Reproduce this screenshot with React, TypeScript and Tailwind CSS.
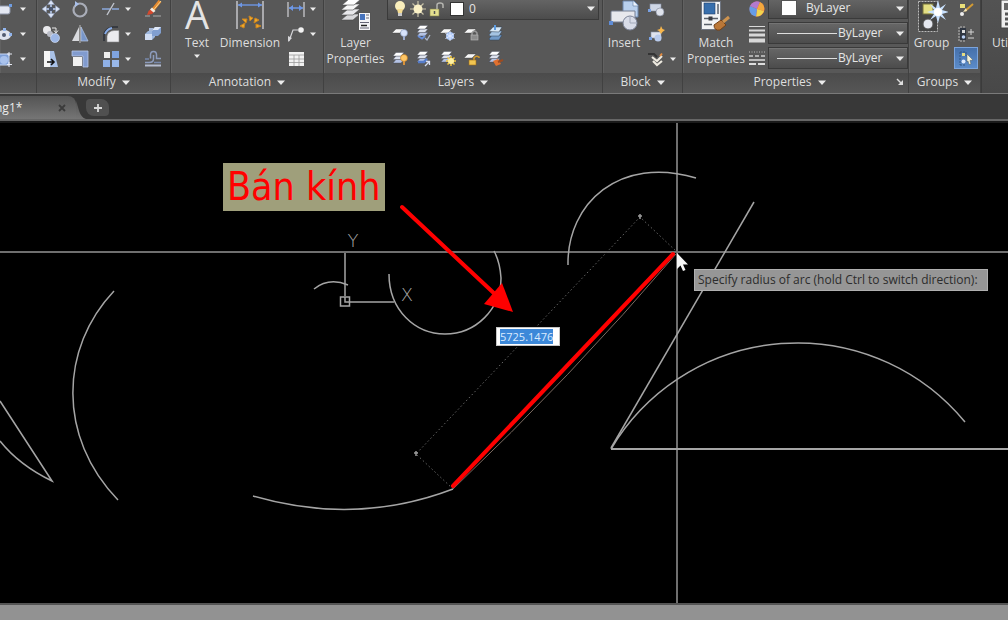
import React from "react";

type IconProps = { children: React.ReactNode; size?: "sm" | "lg" };

function Icon({ children, size = "sm" }: IconProps) {
  return size === "sm" ? (
    <svg viewBox="0 0 18 18" className="block h-[18px] w-[18px] shrink-0" aria-hidden="true">
      {children}
    </svg>
  ) : (
    <svg viewBox="0 0 32 32" className="block h-8 w-8 shrink-0" aria-hidden="true">
      {children}
    </svg>
  );
}

function Caret({ large = false }: { large?: boolean }) {
  return (
    <svg
      viewBox="0 0 8 5"
      className={large ? "block h-[5px] w-2 shrink-0" : "block h-1 w-[6px] shrink-0"}
      aria-hidden="true"
    >
      <path d="M0 0.5H8L4 5Z" fill="#ececec" />
    </svg>
  );
}

function Tool({ label, children, caret = false }: { label: string; children: React.ReactNode; caret?: boolean }) {
  return (
    <button type="button" aria-label={label} className="flex h-6 items-center gap-[5px]">
      <Icon>{children}</Icon>
      {caret && <Caret />}
    </button>
  );
}

function BigTool({
  lines,
  width,
  children,
  caret = false,
}: {
  lines: string[];
  width: string;
  children: React.ReactNode;
  caret?: boolean;
}) {
  return (
    <button type="button" className={`flex shrink-0 flex-col items-center ${width}`}>
      <span className="flex h-[35px] items-start">
        <Icon size="lg">{children}</Icon>
      </span>
      {lines.map((line) => (
        <span key={line} className="whitespace-nowrap text-xs leading-4">
          {line}
        </span>
      ))}
      {caret && (
        <span className="mt-[3px]">
          <Caret />
        </span>
      )}
    </button>
  );
}

function Panel({
  title,
  width,
  children,
  launcher = false,
}: {
  title: string;
  width: string;
  children: React.ReactNode;
  launcher?: boolean;
}) {
  return (
    <section
      className={`flex shrink-0 flex-col border-r border-[#414141] shadow-[inset_1px_0_0_#616161] ${width}`}
    >
      <div className="flex h-[73px] items-start">{children}</div>
      <div className="flex h-5 items-center bg-linear-to-b from-[#4b4b4b] to-[#565656] pb-[2px]">
        <button type="button" className="flex flex-1 items-center justify-center gap-[6px] text-xs leading-4">
          {title}
          {title && <Caret large />}
        </button>
        {launcher && (
          <button type="button" aria-label="Open properties palette" className="pr-1">
            <svg viewBox="0 0 8 8" className="h-2 w-2" aria-hidden="true">
              <path d="M1 1L5 5" stroke="#ddd" strokeWidth="1.4" fill="none" />
              <path d="M7 2V7H2Z" fill="#ddd" />
            </svg>
          </button>
        )}
      </div>
    </section>
  );
}

function Stack({ y = 0 }: { y?: number }) {
  return (
    <g transform={`translate(0 ${y})`} stroke="#454a58" strokeWidth=".4">
      <path d="M2 14L5 10.500H13L10 14Z" fill="#b5c3e4" />
      <path d="M2 10.500L5 7H13L10 10.500Z" fill="#dde2ee" />
      <path d="M2 7L5 3.500H13L10 7Z" fill="#fff" />
    </g>
  );
}

function Sheet() {
  return <path d="M1 9L5 5H13L9 9Z" fill="#f7f7f7" stroke="#444" strokeWidth=".4" />;
}

const comboClass =
  "flex h-[22px] items-center border border-[#3a3a3a] bg-linear-to-b from-[#676767] to-[#4c4c4c] pr-[3px] shadow-[inset_0_1px_0_#747474]";
const selectClass = "min-w-0 flex-1 appearance-none bg-transparent text-xs leading-4 text-[#e6e6e6] outline-none";

function CreatePanel() {
  return (
    <Panel title="" width="w-[37px]">
      <div className="-mt-[3px] -ml-[3px] flex flex-col gap-px">
        <Tool label="Rectangle" caret>
          <rect x="0" y="6" width="13" height="8" rx="2" fill="#e4e8f2" stroke="#8d95a8" />
          <rect x="12" y="4" width="3" height="3" fill="#6f9de2" />
        </Tool>
        <Tool label="Ellipse" caret>
          <ellipse cx="7" cy="10" rx="7" ry="5" fill="#dfe3ee" />
          <circle cx="7" cy="10" r="2" fill="#525b70" />
          <rect x="6" y="3" width="3" height="3" fill="#91b5ee" />
          <rect x="12" y="8" width="3" height="3" fill="#91b5ee" />
        </Tool>
        <Tool label="Boundary" caret>
          <rect x="1" y="4" width="11" height="11" fill="#7f9fd6" stroke="#c8d8f5" />
          <circle cx="7" cy="10" r="4" fill="#a9c2ec" />
          <path d="M12 2V6M10 4H15M12 12V17M10 14.5H15" stroke="#e5e9f4" />
        </Tool>
      </div>
    </Panel>
  );
}

function ModifyPanel() {
  return (
    <Panel title="Modify" width="w-[134px]">
      <div className="-mt-[3px] ml-[5px] grid grid-cols-[29px_31px_42px_20px] gap-y-px">
        <Tool label="Move">
          <path
            d="M9 0L12.500 4.500H5.500ZM9 18L12.500 13.500H5.500ZM0 9L4.500 5.500V12.500ZM18 9L13.500 5.500V12.500Z"
            fill="#dbe4f6"
            stroke="#8092b5"
            strokeWidth=".5"
          />
          <path d="M9 4V14M4 9H14" stroke="#a5b4d0" strokeWidth="2" />
          <rect x="7" y="7" width="4" height="4" fill="#4a566e" />
        </Tool>
        <Tool label="Rotate">
          <circle cx="9" cy="10" r="6.5" fill="none" stroke="#a9adb8" strokeWidth="2.200" />
          <path d="M4 1L8 4L4 7Z" fill="#a9c0ea" />
        </Tool>
        <Tool label="Trim" caret>
          <path d="M0 9H8M10 9H17" stroke="#8ba8db" strokeWidth="1.6" />
          <path d="M5 15L12 3" stroke="#c2c6cf" strokeWidth="1.4" />
        </Tool>
        <Tool label="Erase">
          <path d="M8 11L16 1" stroke="#e58a2e" strokeWidth="3.500" />
          <path d="M9.500 10L17 1" stroke="#f7d28c" strokeWidth="1" />
          <path d="M3 15L4.500 11L7 9L10 12L8 14Z" fill="#d4482d" />
          <path d="M6 9.500L8 7.500L11.500 11L9.500 12.500Z" fill="#f3ede1" />
          <path d="M1 16H6M9 16H17" stroke="#aaa" />
        </Tool>
        <Tool label="Copy">
          <circle cx="5" cy="5" r="4" fill="#e9e9ec" />
          <circle cx="8" cy="9" r="3" fill="#b9bcc6" />
          <circle cx="13" cy="13" r="4.500" fill="#9db7e6" stroke="#dce7fb" strokeWidth=".6" />
          <path d="M10 3H14V7M12 5.500L14 8L16 5.500" fill="none" stroke="#e9e9e9" />
        </Tool>
        <Tool label="Mirror">
          <path d="M8 2V16H1Z" fill="#d9dade" />
          <path d="M10 2V16H17Z" fill="#7896c8" stroke="#b8c9e8" strokeWidth=".7" />
          <path d="M9 0V18" stroke="#eee" strokeWidth=".7" />
        </Tool>
        <Tool label="Fillet" caret>
          <path d="M5 17V11Q6 6 12 5.500H17V17Z" fill="#ececef" stroke="#888" strokeWidth=".6" />
          <path d="M2 16V10Q3 3 11 2H16" fill="none" stroke="#2c3038" strokeWidth="1.500" />
          <path d="M3 9Q5 4 10 3" fill="none" stroke="#88ade9" strokeWidth="2" />
        </Tool>
        <Tool label="Explode">
          <path d="M1 9L4 6H11V12L8 15H1Z" fill="#9db7de" />
          <path d="M1 9H8V15H1Z" fill="#cfdcf2" />
          <path d="M8 5L11 2H17V8L14 11H8Z" fill="#819fd0" />
          <path d="M8 5L11 2H17L14 5Z" fill="#dfe8f8" />
          <path d="M5 6V3H9V6" fill="#a6b9da" />
        </Tool>
        <Tool label="Stretch">
          <path d="M2 1H8V17H2Z" fill="#f5f5f5" />
          <path d="M8 1H12L16 17H8Z" fill="#a9c1e7" />
          <path d="M5 12H12M9 9L12 12L9 15" stroke="#111" strokeWidth="1.600" fill="none" />
        </Tool>
        <Tool label="Scale">
          <path d="M1 1H17V17H12V6H1Z" fill="#819bce" stroke="#b7c8eb" strokeWidth=".8" />
          <rect x="2" y="7" width="9" height="9" fill="#f0f0f0" />
        </Tool>
        <Tool label="Array" caret>
          <rect x="2" y="2" width="6" height="6" fill="#eee" />
          <rect x="10" y="1" width="7" height="7" fill="#7fa3df" />
          <rect x="1" y="10" width="7" height="7" fill="#8fb0e6" />
          <rect x="10" y="10" width="7" height="7" fill="#98b7e9" />
        </Tool>
        <Tool label="Offset">
          <path
            d="M6.500 8.500V5Q6.500 1.500 9.500 1.500Q12.500 1.500 12.500 5V8.500H17M1 12.500H5Q9.500 12.500 9.500 9V5"
            fill="none"
            stroke="#8d9cbd"
            strokeWidth="1.500"
          />
          <path d="M1 15.500H17" stroke="#b5bdd0" strokeWidth="2" />
          <path d="M10 12.500H17M1 9H5" stroke="#7788ab" strokeWidth="1.300" />
        </Tool>
      </div>
    </Panel>
  );
}

function AnnotationPanel() {
  return (
    <Panel title="Annotation" width="w-[153px]">
      <BigTool lines={["Text"]} width="ml-1 w-11" caret>
        <text x="16" y="29" fontSize="38" textAnchor="middle" fill="#e4e4e4">
          A
        </text>
      </BigTool>
      <BigTool lines={["Dimension"]} width="w-[62px]">
        <path d="M3 1V29M29 1V29" stroke="#c3c3c8" strokeWidth="1.500" />
        <path d="M4 5H28" stroke="#6d97e6" strokeWidth="1.400" />
        <path d="M4 5L8 2.500V7.500ZM28 5L24 2.500V7.500Z" fill="#6d97e6" />
        <path
          d="M6 26L11 23L10 28ZM8 19L13 19L12 23ZM15 16L19 18L16 21ZM21 18L25 20L20 23ZM22 24L27 26L22 28Z"
          fill="#f0a92b"
          stroke="#c98420"
          strokeWidth="1"
        />
      </BigTool>
      <div className="-mt-[3px] ml-[6px] flex flex-col gap-px">
        <Tool label="Linear dimension" caret>
          <path d="M1 2V17M17 2V17" stroke="#c8c8cc" strokeWidth="1.300" />
          <path d="M2 8H16" stroke="#6d97e6" strokeWidth="1.500" />
          <path d="M2 8L6 5V11ZM16 8L12 5V11Z" fill="#6d97e6" />
        </Tool>
        <Tool label="Leader" caret>
          <path d="M2 16L6 5H11" fill="none" stroke="#d6d6d9" strokeWidth="1.200" />
          <path d="M1 17L1 11L5 13Z" fill="#d6d6d9" />
          <circle cx="14" cy="5" r="2.800" fill="#f3f3f3" />
        </Tool>
        <Tool label="Table">
          <rect x="2" y="2" width="15" height="14" fill="#f1f1f1" />
          <path d="M2 5H17M2 9H17M2 12.500H17M7 5V16M12 5V16" stroke="#9b9b9b" strokeWidth=".8" />
        </Tool>
      </div>
    </Panel>
  );
}

function LayersPanel() {
  return (
    <Panel title="Layers" width="w-[279px]">
      <BigTool lines={["Layer", "Properties"]} width="w-[63px]">
        <g stroke="#4a4a4a" strokeWidth=".6">
          <path d="M1 20L8 14H20L13 20Z" fill="#d9d9dc" />
          <path d="M1 15L8 9H20L13 15Z" fill="#e9e9ec" />
          <path d="M1 10L8 4H20L13 10Z" fill="#f7f7f7" />
          <path d="M2 5L9 -1H21L14 5Z" fill="#fff" />
        </g>
        <rect x="18.500" y="12.500" width="12" height="18" fill="#f4f4f6" stroke="#555" />
        <rect x="20" y="14" width="5" height="6" fill="#4673bd" />
        <path d="M26 15H29M26 18H29M20 22.500H29M20 28H29" stroke="#667" strokeWidth="1.200" />
        <path d="M21 25.500H27" stroke="#222" strokeWidth="1.500" />
      </BigTool>
      <div className="-mt-[3px] mr-[3px] flex flex-1 flex-col">
        <div className="flex h-[23px] items-center border border-[#3a3a3a] bg-linear-to-b from-[#676767] to-[#4c4c4c] pr-[3px] pl-[3px]">
          <Icon>
            <circle cx="9" cy="6" r="5" fill="#f9eebc" />
            <path d="M6 9H12L11 13H7Z" fill="#f4dc91" />
            <rect x="7" y="13" width="4" height="3" fill="#c9c9c9" />
          </Icon>
          <Icon>
            <path
              d="M9 1V17M1 9H17M3.500 3.500L14.500 14.500M14.500 3.500L3.500 14.500"
              stroke="#c9c3a8"
              strokeWidth="1.200"
            />
            <circle cx="9" cy="9" r="4.500" fill="#fbf1c6" />
          </Icon>
          <Icon>
            <rect x="3" y="9" width="9" height="7" fill="#e4e08f" stroke="#83804a" strokeWidth=".6" />
            <path d="M10 9V5Q10 3 13 3Q16 3 16 5V8" fill="none" stroke="#b5b5b0" strokeWidth="1.500" />
            <path d="M7.500 11V14" stroke="#555" strokeWidth="1.500" />
          </Icon>
          <span className="mx-[5px] h-[14px] w-[14px] border border-[#333] bg-white" />
          <select aria-label="Layer" defaultValue="0" className={selectClass}>
            <option value="0">0</option>
          </select>
          <Caret large />
        </div>
        <div className="mt-px ml-1 grid grid-cols-[24px_24px_24px_24px_24px] gap-y-px">
          <Tool label="Layer off">
            <Sheet />
            <circle cx="13" cy="9" r="3.500" fill="#d7e3fb" stroke="#7e91b6" strokeWidth=".6" />
            <path d="M13 12V16" stroke="#9babce" strokeWidth="2" />
          </Tool>
          <Tool label="Isolate layer">
            <Stack y={-2} />
            <path d="M3 12L7 14.500L10 12" stroke="#688fdb" strokeWidth="2" fill="none" />
            <path d="M10 14L12 16L15 11" stroke="#aab3c7" strokeWidth="1.300" fill="none" />
          </Tool>
          <Tool label="Freeze layer">
            <Sheet />
            <circle cx="11" cy="12" r="4" fill="#abc7f8" />
            <path d="M11 7V17M6.500 9.500L15.500 14.500M15.500 9.500L6.500 14.500" stroke="#dfe9ff" />
          </Tool>
          <Tool label="Lock layer">
            <Sheet />
            <path d="M9 11V9Q11.500 5 14 9V11" fill="none" stroke="#999" strokeWidth="1.500" />
            <rect x="8" y="11" width="7" height="5" fill="#8c8c8c" stroke="#bbb" strokeWidth=".6" />
          </Tool>
          <Tool label="Make current">
            <path d="M2 15L5 11H15L12 16H3Z" fill="#719ac8" stroke="#2e4057" strokeWidth=".5" />
            <path d="M2 11L5 7H15L12 12H3Z" fill="#a5c4e3" stroke="#2e4057" strokeWidth=".5" />
            <path d="M2 7.500L6 3H15L12 8Z" fill="#d8e8f5" stroke="#2e4057" strokeWidth=".5" />
            <path d="M8 1V6" stroke="#5d9be0" strokeWidth="2" />
          </Tool>
          <Tool label="Turn all layers on">
            <Stack />
            <circle cx="13" cy="9" r="3.500" fill="#ffc665" stroke="#b87218" strokeWidth=".6" />
            <path d="M13 12V16" stroke="#d7923c" strokeWidth="2" />
          </Tool>
          <Tool label="Unisolate layer">
            <Stack y={-1} />
            <path d="M3 13H9L12 10" stroke="#557cc9" strokeWidth="2.500" fill="none" />
            <path d="M10 17L14 13M11 12.500H14.500V16" stroke="#d6ddf0" strokeWidth="1.300" fill="none" />
          </Tool>
          <Tool label="Thaw all layers">
            <Stack y={-1} />
            <path
              d="M12 7V17M7 12H17M8.500 8.500L15.500 15.500M15.500 8.500L8.500 15.500"
              stroke="#f4c63d"
              strokeWidth="1.500"
            />
            <circle cx="12" cy="12" r="3" fill="#fff2a3" />
          </Tool>
          <Tool label="Unlock layer">
            <Sheet />
            <path d="M11 11V9Q13 6 16 8V9" fill="none" stroke="#d39a2c" strokeWidth="1.500" />
            <rect x="6" y="11" width="7" height="5" fill="#f1c551" stroke="#a06f19" strokeWidth=".6" />
          </Tool>
          <Tool label="Match layer">
            <Stack y={-1} />
            <path d="M6 12L11 10L14 15L9 17Z" fill="#e0702f" />
            <path d="M11 13L16 11" stroke="#9c4b21" strokeWidth="2" />
          </Tool>
        </div>
      </div>
    </Panel>
  );
}

function BlockPanel() {
  return (
    <Panel title="Block" width="w-[80px]">
      <BigTool lines={["Insert"]} width="w-[42px]">
        <path d="M15 1H26L30 5V17H15Z" fill="#b8d0ee" stroke="#6c86ab" />
        <path d="M25 1V6H30" fill="#eef5fd" stroke="#6c86ab" strokeWidth=".7" />
        <path d="M3 12Q3 11 4 11H27V22H3Z" fill="#e7e8ed" stroke="#777f91" />
        <circle cx="22" cy="23" r="7" fill="#d8dce8" stroke="#7b8397" />
        <path d="M22 16V23H29" fill="none" stroke="#a2a9ba" />
        <rect x="1" y="21" width="4" height="4" fill="#5f8cd6" />
      </BigTool>
      <div className="-mt-[3px] ml-[2px] flex flex-col gap-px">
        <Tool label="Create block">
          <rect x="3" y="4" width="11" height="7" fill="#cfd7e6" stroke="#8993a8" strokeWidth=".6" />
          <circle cx="13" cy="12" r="4" fill="#dfe3ec" stroke="#7c8497" strokeWidth=".6" />
          <rect x="1" y="9" width="3" height="3" fill="#79a1e3" />
        </Tool>
        <Tool label="Edit block">
          <rect x="4" y="7" width="10" height="6" fill="#dfe3ee" stroke="#8993a8" strokeWidth=".6" />
          <circle cx="11" cy="13" r="3.500" fill="#b9cbed" />
          <path d="M14 1L15.500 4L18 5L15.500 7L14 9L12 6L10 5L13 4Z" fill="#f7b64c" />
          <rect x="2" y="12" width="3" height="3" fill="#79a1e3" />
        </Tool>
        <Tool label="Edit attributes" caret>
          <path d="M1 4H7L10 7" stroke="#343434" strokeWidth="2" fill="none" />
          <path d="M5 7L10 11L15 6M6 11L10 15L15 11" fill="none" stroke="#eeeae0" strokeWidth="2.200" />
          <path d="M13 6L15 3.500" stroke="#e18a3e" strokeWidth="2" />
        </Tool>
      </div>
    </Panel>
  );
}

function LineCombo({ label }: { label: string }) {
  return (
    <div className={comboClass}>
      <span className="mr-px ml-2 h-px w-[60px] bg-[#dedede]" />
      <select aria-label={label} defaultValue="ByLayer" className={selectClass}>
        <option>ByLayer</option>
      </select>
      <Caret large />
    </div>
  );
}

function PropertiesPanel() {
  return (
    <Panel title="Properties" width="w-[226px]" launcher>
      <BigTool lines={["Match", "Properties"]} width="ml-[2px] w-[62px]">
        <rect x="1.500" y="1.500" width="19" height="28" fill="#f2f3f5" stroke="#6f7682" />
        <rect x="4" y="3" width="11" height="11" fill="#386fad" stroke="#203f69" strokeWidth=".6" />
        <path d="M18 4V14" stroke="#59606b" strokeWidth="1.500" />
        <path d="M4 18.500H18M4 24.500H12" stroke="#59606b" strokeWidth="1.500" />
        <rect x="8.500" y="16.500" width="4" height="4" fill="#3a3d44" />
        <path d="M14 25L21 20L26 25L20 30Q14 31 14 25Z" fill="#ba7738" stroke="#744015" />
        <path d="M23 22L29 17" stroke="#cd934f" strokeWidth="3" />
      </BigTool>
      <div className="-mt-[3px] ml-px flex flex-col gap-px">
        <Tool label="Object color">
          <circle cx="9" cy="9" r="7.500" fill="#dc4c40" />
          <path d="M9 9L2 6A7.500 7.500 0 0 1 12 2Z" fill="#b27ace" />
          <path d="M9 9L12 2A7.500 7.500 0 0 1 16 11Z" fill="#f3a83d" />
          <path d="M9 9L16 11A7.500 7.500 0 0 1 8 16.500Z" fill="#f0d44e" />
          <path d="M9 9L8 16.500A7.500 7.500 0 0 1 2 6Z" fill="#659ce6" />
        </Tool>
        <Tool label="Lineweight">
          <path d="M1 1.500H17" stroke="#d8d8d8" />
          <path d="M1 5.500H17" stroke="#d8d8d8" strokeWidth="2" />
          <path d="M1 10H17" stroke="#d8d8d8" strokeWidth="3" />
          <path d="M1 15.500H17" stroke="#d8d8d8" strokeWidth="4" />
        </Tool>
        <Tool label="Linetype">
          <path d="M1 2H17" stroke="#bbb" strokeDasharray="1 1.500" />
          <path d="M1 6H17" stroke="#ccc" strokeWidth="1.500" strokeDasharray="4 2" />
          <path d="M1 10H17" stroke="#ddd" strokeWidth="1.500" />
          <path d="M1 14H17" stroke="#ddd" strokeWidth="2" strokeDasharray="7 2" />
        </Tool>
      </div>
      <div className="-mt-[3px] ml-[2px] flex flex-1 flex-col gap-[3px]">
        <div className={comboClass}>
          <span className="mr-[9px] ml-3 h-4 w-4 border border-[#555] bg-white" />
          <select aria-label="Object color value" defaultValue="ByLayer" className={selectClass}>
            <option>ByLayer</option>
          </select>
          <Caret large />
        </div>
        <LineCombo label="Lineweight value" />
        <LineCombo label="Linetype value" />
      </div>
    </Panel>
  );
}

function GroupsPanel() {
  return (
    <Panel title="Groups" width="w-[72px]">
      <BigTool lines={["Group"]} width="w-[45px]">
        <rect x="2.500" y="1.500" width="19" height="30" fill="#454545" stroke="#bbb" strokeDasharray="2 1" />
        <rect x="7" y="4" width="10" height="10" fill="#e3df83" stroke="#76733d" />
        <circle cx="12" cy="24" r="5" fill="#e5e8ef" stroke="#555" />
        <path
          d="M22 0L24 8L30 4L26 10L33 12L26 14L30 20L24 16L22 23L20 16L14 20L18 14L11 12L18 10L14 4L20 8Z"
          fill="#c9e2ff"
        />
        <circle cx="22" cy="12" r="4" fill="#fff" />
      </BigTool>
      <div className="-mt-[3px] flex flex-col items-center gap-px">
        <Tool label="Ungroup">
          <rect x="3" y="4" width="5" height="4" fill="#e9df79" />
          <circle cx="5" cy="14" r="2" fill="#eee" />
          <path d="M8 11L16 4" stroke="#d39b33" strokeWidth="2" />
          <path d="M6 12L9 8L10 11Z" fill="#f2e5ba" />
        </Tool>
        <Tool label="Group edit">
          <path d="M8 2H2V16H8" fill="none" stroke="#bbb" strokeDasharray="2 1" />
          <rect x="3" y="3" width="6" height="12" fill="#2f3642" />
          <rect x="5" y="5" width="3" height="3" fill="#ddd" />
          <circle cx="6.500" cy="12" r="1.800" fill="#bcd1f4" />
          <path d="M11 7H17M14 4V10M11 13H17" stroke="#d5d5d5" />
        </Tool>
        <button
          type="button"
          aria-label="Group selection"
          aria-pressed="true"
          className="flex h-[22px] w-6 items-center justify-center border border-[#7ba4dc] bg-linear-to-b from-[#4570ab] to-[#5b8bc9]"
        >
          <Icon>
            <path d="M3 3H8M3 16H8M3 3V16M9 3V7" stroke="#355681" strokeDasharray="2 1" />
            <rect x="5" y="4" width="3" height="3" fill="#e5dc83" />
            <circle cx="6.500" cy="12.500" r="2" fill="#ddeaff" />
            <path
              d="M10 5L16 11L13 11.500L14 15L12 15.500L11 12L10 13Z"
              fill="#f5f1d8"
              stroke="#4e5f63"
              strokeWidth=".5"
            />
          </Icon>
        </button>
      </div>
    </Panel>
  );
}

function UtilitiesPanel() {
  return (
    <section className="flex shrink-0 flex-col border-l border-[#3b3b3b] bg-linear-to-b from-[#535353] to-[#484848] pl-[7px]">
      <BigTool lines={["Utilities"]} width="w-12">
        <rect x="4" y="0" width="26" height="28" fill="#eee" stroke="#444" />
        <rect x="7" y="3" width="20" height="7" fill="#656565" />
        <path d="M8 14H27M8 19H27M8 24H27" stroke="#555" strokeWidth="3" strokeDasharray="3 2" />
      </BigTool>
    </section>
  );
}

function TabBar() {
  return (
    <nav className="flex h-[27px] items-end border-b-2 border-[#666] bg-[#383838]" aria-label="Drawings">
      <div className="flex h-[23px] w-[76px] items-center justify-between rounded-tr-lg bg-linear-to-b from-[#545454] to-[#757575] pr-[10px]">
        <a href="#drawing" className="-ml-[5px] text-xs leading-4 text-[#ececec]">
          ng1*
        </a>
        <button type="button" aria-label="Close drawing">
          <svg viewBox="0 0 8 8" className="h-2 w-2" aria-hidden="true">
            <path d="M1 1L7 7M7 1L1 7" stroke="#3b3b3b" strokeWidth="1.800" />
          </svg>
        </button>
      </div>
      <svg viewBox="0 0 10 23" className="h-[23px] w-[10px]" aria-hidden="true">
        <defs>
          <linearGradient id="tab" x2="0" y2="1">
            <stop stopColor="#545454" />
            <stop offset="1" stopColor="#757575" />
          </linearGradient>
        </defs>
        <path d="M0 5C3 12 3 21 10 23H0Z" fill="url(#tab)" />
      </svg>
      <button
        type="button"
        aria-label="New drawing"
        className="mb-[3px] flex h-[17px] w-[23px] items-center justify-center rounded-tl-sm rounded-tr-lg rounded-br-sm rounded-bl-lg bg-[#505050]"
      >
        <svg viewBox="0 0 10 10" className="h-[10px] w-[10px]" aria-hidden="true">
          <path d="M5 1V9M1 5H9" stroke="#d8d8d8" strokeWidth="1.800" />
        </svg>
      </button>
    </nav>
  );
}

function Drawing() {
  return (
    <main id="drawing" className="relative flex-1 overflow-hidden border-t-2 border-[#1a1a1a] bg-black">
      <svg className="absolute inset-0 h-full w-full" aria-hidden="true">
        <g transform="translate(0 -123)" fill="none">
          <g stroke="#6f6f6f" strokeWidth="2">
            <path d="M0 252H4000M677 0V3000" />
          </g>
          <g stroke="#a5a5a5" strokeWidth="1.500">
            <path d="M114 291C60 348 57 437 118 500" />
            <path d="M0 401L52 481Q19 465 0 441" />
            <path d="M253 496Q356 526 453 489" />
            <path d="M314 289Q329 277 348 285" />
            <path d="M389 274C389 310 415 334 445 334A56 56 0 0 0 501 278Q500 262 494 251" />
            <path d="M568 265C567 203 620 155 696 178" />
            <path d="M754 202L611 448" />
            <path d="M611 449A217 217 0 0 1 965 422" />
            <path d="M611 449H4000" strokeWidth="2" />
            <path d="M345 253V296M350 302H394" />
            <rect x="340.500" y="297" width="9" height="9" />
            <path d="M345 297V302H350" />
          </g>
          <path d="M453 489L416 454L640 217L677 252" stroke="#666" strokeDasharray="1.500 2.500" />
          <path d="M414 453H418M416 451V456M638 216H642M640 214V219" stroke="#9b9b9b" strokeWidth="1.500" />
          <path d="M453 489Q571 377 676 254" stroke="#7a6a60" />
          <path d="M453 486L673 254" stroke="#ff0000" strokeWidth="4" strokeLinecap="round" />
          <path d="M402 207L498 297" stroke="#ff0000" strokeWidth="4" strokeLinecap="round" />
          <path d="M513 312L484 304L502 283Z" fill="#ff0000" />
          <g
            fill="#a6a6a6"
            fontFamily="'DejaVu Sans Light', 'DejaVu Sans', sans-serif"
            fontWeight="200"
            fontSize="18"
            textAnchor="middle"
          >
            <text x="353" y="247">
              Y
            </text>
            <text x="407" y="301">
              X
            </text>
          </g>
        </g>
      </svg>
      <p className="absolute top-[40px] left-[223px] bg-[#9f9f7b] px-1 font-['DejaVu_Sans_Condensed','DejaVu_Sans',sans-serif] text-[39px] leading-[48px] whitespace-nowrap text-[#ff0000]">
        Bán kính
      </p>
      <div className="absolute top-[204px] left-[496px] flex h-[19px] w-16 items-center border border-[#c5c5c5] bg-white px-[3px]">
        <input
          aria-label="Arc radius"
          defaultValue="5725.1476"
          className="h-[15px] w-[53px] bg-[#3c88d9] text-[11px] leading-[15px] text-[#dcecff] outline-none"
        />
      </div>
      <p
        role="tooltip"
        className="absolute top-[146px] left-[694px] border border-[#b0b0b0] bg-[#969696] pr-[9px] pl-[3px] text-xs leading-5 whitespace-nowrap text-[#2c2c2c]"
      >
        Specify radius of arc (hold Ctrl to switch direction):
      </p>
      <svg viewBox="0 0 12 20" className="absolute top-[129px] left-[676px] h-5 w-3" aria-hidden="true">
        <path d="M1 1V17L4.500 13.500L7 19L9.500 18L7 12.500H12Z" fill="#f5f5f5" />
      </svg>
    </main>
  );
}

export default function App() {
  return (
    <div className="flex min-h-screen flex-col overflow-hidden bg-black font-['Open_Sans','Noto_Sans',sans-serif] text-[#dedede]">
      <header className="flex overflow-hidden border-b border-[#7a7a7a] bg-[#585858]">
        <CreatePanel />
        <ModifyPanel />
        <AnnotationPanel />
        <LayersPanel />
        <BlockPanel />
        <PropertiesPanel />
        <GroupsPanel />
        <UtilitiesPanel />
      </header>
      <TabBar />
      <Drawing />
      <footer className="h-[17px] border-t-2 border-[#555] bg-[#929292]" />
    </div>
  );
}
